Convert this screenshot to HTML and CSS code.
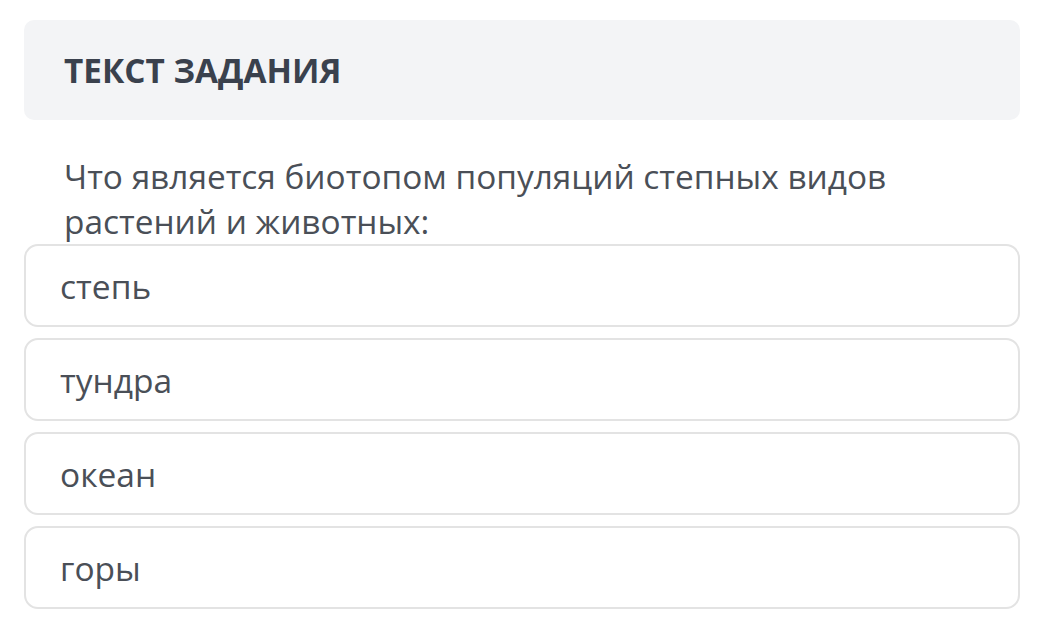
FILE: index.html
```html
<!DOCTYPE html>
<html lang="ru">
<head>
<meta charset="utf-8">
<link rel="stylesheet" href="styles.css">
</head>
<body>
<div class="page">
  <div class="task-head">
    <h2 class="task-title">ТЕКСТ ЗАДАНИЯ</h2>
  </div>
  <p class="question">Что является биотопом популяций степных видов растений и животных:</p>
  <div class="options">
    <div class="option">степь</div>
    <div class="option">тундра</div>
    <div class="option">океан</div>
    <div class="option">горы</div>
  </div>
</div>
</body>
</html>
```

FILE: styles.css
```css
html, body {
  margin: 0;
  padding: 0;
  background: #ffffff;
}
.page {
  padding: 20px 17px 0 24px;
  font-family: "Open Sans", "Noto Sans", sans-serif;
}
.task-head {
  background: #f3f4f6;
  border-radius: 10px;
  height: 100px;
  display: flex;
  align-items: center;
  padding-left: 40px;
}
.task-title {
  margin: 0;
  font-size: 33.3px;
  font-weight: 700;
  color: #3a414d;
  line-height: 1;
  padding-top: 2px;
}
.question {
  margin: 34px 0 0 40px;
  font-size: 33.4px;
  line-height: 45px;
  color: #4a4f57;
  max-width: 880px;
}
.options {
  display: flex;
  flex-direction: column;
  gap: 11px;
}
.option {
  box-sizing: border-box;
  height: 83px;
  border: 2px solid #e3e3e3;
  border-radius: 14px;
  display: flex;
  align-items: center;
  padding-left: 34px;
  font-size: 33.5px;
  color: #4a4f57;
}
```
